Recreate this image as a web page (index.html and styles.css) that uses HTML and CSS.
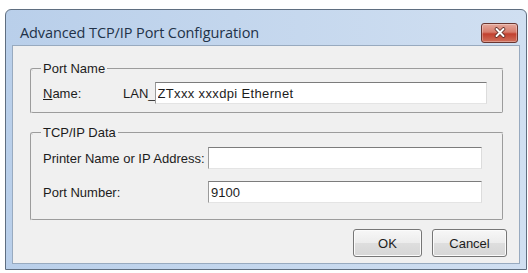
FILE: index.html
```html
<!DOCTYPE html>
<html>
<head>
<meta charset="utf-8">
<title>Advanced TCP/IP Port Configuration</title>
<link rel="stylesheet" href="styles.css">
</head>
<body>
<div class="window">
  <div class="titlebar">
    <span class="title">Advanced TCP/IP Port Configuration</span>
    <button class="close" aria-label="Close">
      <svg width="14" height="11" viewBox="0 0 14 11"><path d="M3.5 2 L10.5 9 M10.5 2 L3.5 9" stroke="#5b2a24" stroke-width="3.6" stroke-linecap="round"/><path d="M3.5 2 L10.5 9 M10.5 2 L3.5 9" stroke="#ffffff" stroke-width="2" stroke-linecap="round"/></svg>
    </button>
  </div>
  <div class="client">
    <fieldset class="group group-port">
      <legend>Port Name</legend>
      <div class="row">
        <label class="lbl lbl-name"><u>N</u>ame:</label>
        <span class="prefix">LAN_</span>
        <input class="field field-name" value="ZTxxx xxxdpi Ethernet">
      </div>
    </fieldset>
    <fieldset class="group group-tcp">
      <legend>TCP/IP Data</legend>
      <div class="row">
        <label class="lbl lbl-wide">Printer Name or IP Address:</label>
        <input class="field field-tcp" value="">
      </div>
      <div class="row row-gap">
        <label class="lbl lbl-wide">Port Number:</label>
        <input class="field field-tcp" value="9100">
      </div>
    </fieldset>
    <div class="buttons">
      <button class="btn btn-ok">OK</button>
      <button class="btn btn-cancel">Cancel</button>
    </div>
  </div>
</div>
</body>
</html>
```

FILE: styles.css
```css
html, body {
  margin: 0;
  padding: 0;
  background: #ffffff;
}
body {
  width: 528px;
  height: 273px;
  overflow: hidden;
  font-family: "Liberation Sans", Arial, sans-serif;
  font-size: 13px;
  color: #1c1c1c;
}
.window {
  margin: 9px 0 0 5px;
  width: 508px;
  height: 254px;
  padding: 0 6px 5px;
  border: 1px solid #5f6e80;
  border-radius: 6px 6px 0 0;
  background: linear-gradient(to right, #b9cfea, #d0dff1);
  display: flex;
  flex-direction: column;
}
.titlebar {
  box-sizing: border-box;
  height: 35px;
  margin: 0 -6px;
  padding: 10px 8px 0 14px;
  display: flex;
  align-items: center;
  justify-content: space-between;
}
.title {
  font-family: "Open Sans", "Noto Sans", sans-serif;
  font-size: 14.5px;
  color: #223248;
  letter-spacing: -0.1px;
}
.close {
  width: 37px;
  height: 20px;
  padding: 0;
  border: 1px solid #6a3630;
  border-radius: 3px;
  background: linear-gradient(to bottom, #e4a89c 0%, #d77d6d 45%, #c2402f 55%, #d0705c 100%);
  display: flex;
  align-items: center;
  justify-content: center;
  box-shadow: inset 0 0 0 1px rgba(255,255,255,0.3);
}
.client {
  box-sizing: border-box;
  width: 508px;
  height: 219px;
  border: 1px solid #98aabf;
  background: #f0f0f0;
  padding: 15px 15px 0 17px;
  display: flex;
  flex-direction: column;
}
.group {
  margin: 0;
  border: 2px groove #f0f0f0;
  border-radius: 3px;
  padding: 6px 0 8px 11px;
  min-width: 0;
}
.group legend {
  padding: 0 2px;
  margin-left: -2px;
  line-height: 15px;
  color: #1c1c1c;
}
.group-tcp {
  margin-top: 11px;
  padding-top: 7px;
  padding-bottom: 16px;
}
.row {
  display: flex;
  align-items: center;
}
.row-gap {
  margin-top: 12px;
}
.lbl-name {
  width: 80px;
}
.lbl-wide {
  width: 165px;
}
.prefix {
  white-space: pre;
}
.field {
  box-sizing: border-box;
  height: 22px;
  margin: 0;
  padding: 0 2px;
  font-family: "Liberation Sans", Arial, sans-serif;
  font-size: 13px;
  color: #1c1c1c;
  background: #ffffff;
  border: 1px solid;
  border-color: #7c7c7c #dcdcdc #e4e4e4 #9a9a9a;
  border-radius: 0;
  outline: none;
}
.field-name {
  width: 332px;
  margin-left: -1px;
  letter-spacing: 0.35px;
}
.field-tcp {
  width: 274px;
}
.buttons {
  margin-top: 8px;
  margin-right: -3px;
  display: flex;
  justify-content: flex-end;
  gap: 10px;
}
.btn {
  height: 28px;
  padding: 0;
  font-family: "Liberation Sans", Arial, sans-serif;
  font-size: 13px;
  color: #1c1c1c;
  border: 1px solid #767676;
  border-radius: 3px;
  background: linear-gradient(to bottom, #f7f7f7 0%, #ececec 50%, #dedede 51%, #d6d6d6 100%);
  box-shadow: inset 0 0 0 1px #fbfbfb;
}
.btn-ok {
  width: 69px;
}
.btn-cancel {
  width: 75px;
}
```
